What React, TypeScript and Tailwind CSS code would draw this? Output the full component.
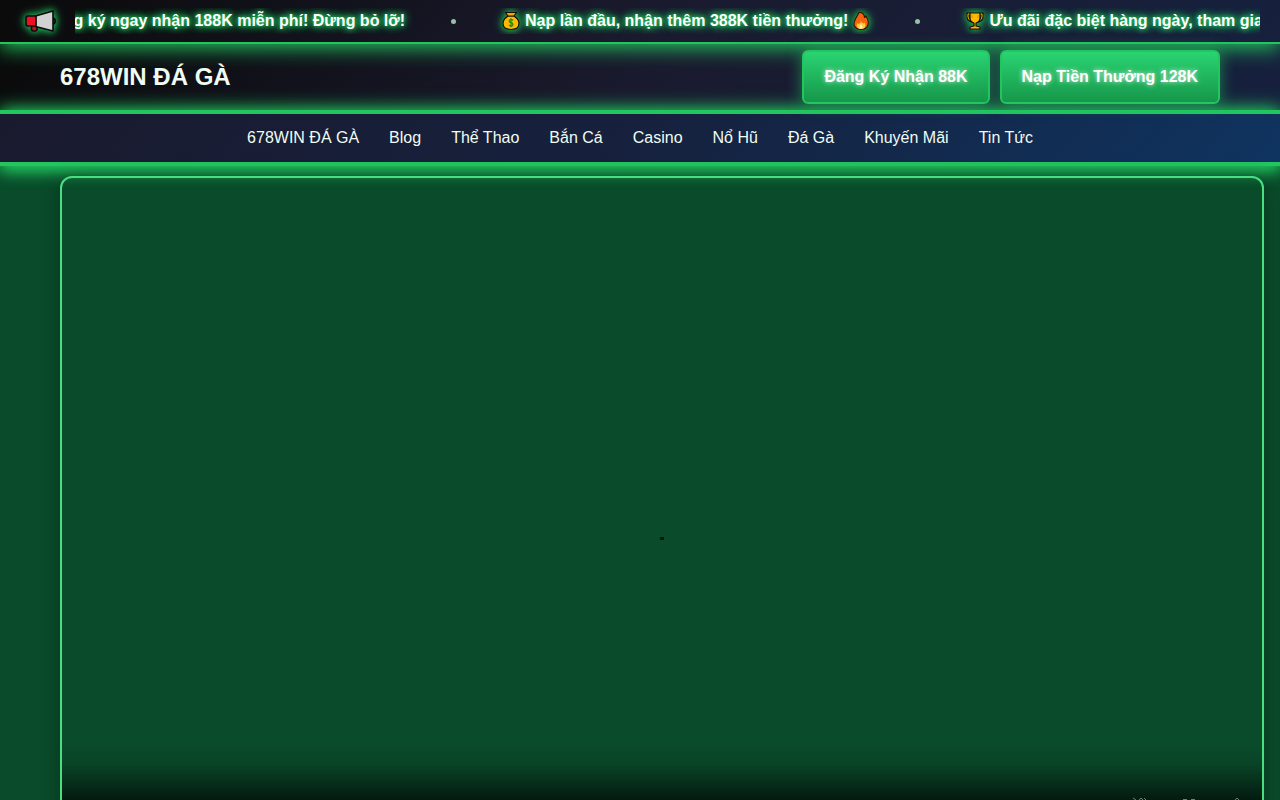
import React from "react";

const glow = "[text-shadow:0_0_10px_#22c55e,0_0_10px_#22c55e,0_0_4px_#22c55e]";
const iconGlow =
  "shrink-0 [filter:drop-shadow(0_0_3px_#1fae55)_drop-shadow(0_0_4px_#178a43)]";

function Megaphone() {
  return (
    <svg viewBox="0 0 32 24" className={`h-6 w-8 ${iconGlow}`} aria-hidden="true">
      <g stroke="#0b0b0b" strokeWidth="1.6" strokeLinejoin="round">
        <path d="M28.500 9c3.600 0 3.600 6 0 6z" fill="#555" />
        <path d="M7.500 16H13v4q0 2-2 2H9.500q-2 0-2-2z" fill="#c50f1f" />
        <path d="M11.500 7 29 2v20l-17.500-4.500z" fill="#d2d2d2" />
        <path d="M4 7h8v10H4q-2 0-2-2V9q0-2 2-2z" fill="#e81224" />
      </g>
    </svg>
  );
}

function MoneyBag() {
  return (
    <svg viewBox="0 0 18 20" className={`h-5 w-[18px] ${iconGlow}`} aria-hidden="true">
      <g stroke="#15110a" strokeWidth="1.200" strokeLinejoin="round">
        <path d="M6 5C0 9 0 14 3 17q6 3 12 0c3-3 3-8-3-12z" fill="#ffb900" />
        <path d="M3.500 1.500h11L12 5H6z" fill="#f7a800" />
      </g>
      <path d="M11 9.500q-1-1.200-2.500-1T7.200 10.200 9 11.700t1.800 1.700T9.300 15 7 14M9 7.300v9" fill="none" stroke="#128a10" strokeWidth="1.200" />
    </svg>
  );
}

function Fire() {
  return (
    <svg viewBox="0 0 16 20" className={`h-5 w-4 ${iconGlow}`} aria-hidden="true">
      <path d="M4.500 4.500 6 1.500c3-.5 5.500 2 5.500 5l1.500-1.500c2.500 4 3 7 1.500 10-2 4.500-11 4.500-13 0C0 12 2 9 3 7z" fill="#f7630c" stroke="#2a1307" strokeWidth="1.100" strokeLinejoin="round" />
      <path d="M8 9.500c0 2 2 2 2.500 3l1-1c2 3 1 6.500-3.500 6.500s-5-3.500-3.500-6l1 1C7 12.500 8 11.500 8 9.500z" fill="#ffc83d" />
      <path d="M8 13c1 1 2 2.500 1.500 4.500h-3Q6 15 8 13z" fill="#fff3b0" />
    </svg>
  );
}

function Trophy() {
  return (
    <svg viewBox="0 0 18 20" className={`h-5 w-[18px] ${iconGlow}`} aria-hidden="true">
      <path d="M5 3H2v3q0 3 4 4M13 3h3v3q0 3-4 4" fill="none" stroke="#15110a" strokeWidth="3" />
      <path d="M5 3H2v3q0 3 4 4M13 3h3v3q0 3-4 4" fill="none" stroke="#ffb900" strokeWidth="1" />
      <path d="M4 2h10v5q0 4-4 5v3l4 1v2H4v-2l4-1v-3q-4-1-4-5z" fill="#ffb900" stroke="#15110a" strokeWidth="1.200" strokeLinejoin="round" />
      <path d="M6 4v3M12 4v3" stroke="#d98c00" strokeWidth="1" />
    </svg>
  );
}

function Separator() {
  return (
    <span className="flex w-[97px] shrink-0 justify-center">
      <span className="size-[5px] rounded-full bg-[#96c0a8]" />
    </span>
  );
}

const links = ["678WIN ĐÁ GÀ", "Blog", "Thể Thao", "Bắn Cá", "Casino", "Nổ Hũ", "Đá Gà", "Khuyến Mãi", "Tin Tức"];

function Cta({ children }: { children: React.ReactNode }) {
  return (
    <a
      href="#"
      className="rounded-md border-2 border-[#22c55e] bg-linear-to-b from-[#2ad472] to-[#16974a] px-5 py-[13px] leading-6 font-bold text-white shadow-[0_0_15px_rgba(34,197,94,0.6)] [text-shadow:0_0_5px_rgba(255,255,255,0.8)]"
    >
      {children}
    </a>
  );
}

export default function App() {
  return (
    <div className="h-screen overflow-hidden bg-[#0a4b2b] font-['Liberation_Sans',Arial,sans-serif] text-base text-[#f0fdf4]">
      <div className="relative z-10 flex h-11 items-center border-b-2 border-[#22c55e] bg-linear-[135deg,#0a0a0a_0%,#1a1a2e_50%,#16213e_100%] pr-5 pl-6 shadow-[0_4px_20px_#22c55e]">
        <Megaphone />
        <div className="ml-[19px] flex h-[26px] min-w-0 flex-1 items-center overflow-hidden font-bold whitespace-nowrap text-white">
          <div className="flex w-[330px] shrink-0 justify-end">
            <span className={glow}>Đăng ký ngay nhận 188K miễn phí! Đừng bỏ lỡ!</span>
          </div>
          <Separator />
          <span className={`flex shrink-0 items-center gap-[5px] ${glow}`}>
            <MoneyBag />
            Nạp lần đầu, nhận thêm 388K tiền thưởng!
            <Fire />
          </span>
          <Separator />
          <span className={`flex shrink-0 items-center gap-[5px] ${glow}`}>
            <Trophy />
            Ưu đãi đặc biệt hàng ngày, tham gia ngay!
          </span>
        </div>
      </div>

      <header className="flex h-[66px] items-center justify-between bg-linear-[135deg,#0a0a0a_0%,#1a1a2e_50%,#16213e_100%] px-[60px]">
        <a href="#" className="text-2xl font-bold">678WIN ĐÁ GÀ</a>
        <div className="relative z-20 flex gap-2.5">
          <Cta>Đăng Ký Nhận 88K</Cta>
          <Cta>Nạp Tiền Thưởng 128K</Cta>
        </div>
      </header>

      <nav className="relative flex h-14 items-center justify-center gap-[30px] border-y-4 border-[#22c55e] bg-linear-[135deg,#1a1a2e_0%,#16213e_50%,#0f3460_100%] shadow-[0_0_20px_#22c55e,0_4px_15px_#22c55e]">
        {links.map((l) => (
          <a key={l} href="#">{l}</a>
        ))}
      </nav>

      <main className="pt-2.5 pr-4 pl-[60px]">
        <section aria-label="Video" className="relative flex h-[724px] items-center justify-center overflow-hidden rounded-xl border-2 border-[#4ade80] shadow-[0_4px_20px_rgba(0,0,0,0.3)]">
          <span className="h-[3px] w-1 bg-[#04180d]" />
          <div className="absolute inset-x-0 bottom-0 flex h-[154px] items-start justify-end bg-[linear-gradient(to_bottom,transparent_0px,rgba(0,0,0,0.1)_20px,rgba(0,0,0,0.33)_35px,rgba(0,0,0,0.65)_56px,rgba(0,0,0,0.9)_110px)] pt-[53px] pr-[22px]">
            <svg viewBox="0 0 108 3" className="h-[3px] w-[108px]" aria-hidden="true">
              <path d="M1 1l3 2M7 3l2-2 2 2M12 1l2 2M51 2.500h4M59 2.500h4M103 3l2-2 2 2" fill="none" stroke="#688474" strokeWidth="1" />
            </svg>
          </div>
        </section>
      </main>
    </div>
  );
}
